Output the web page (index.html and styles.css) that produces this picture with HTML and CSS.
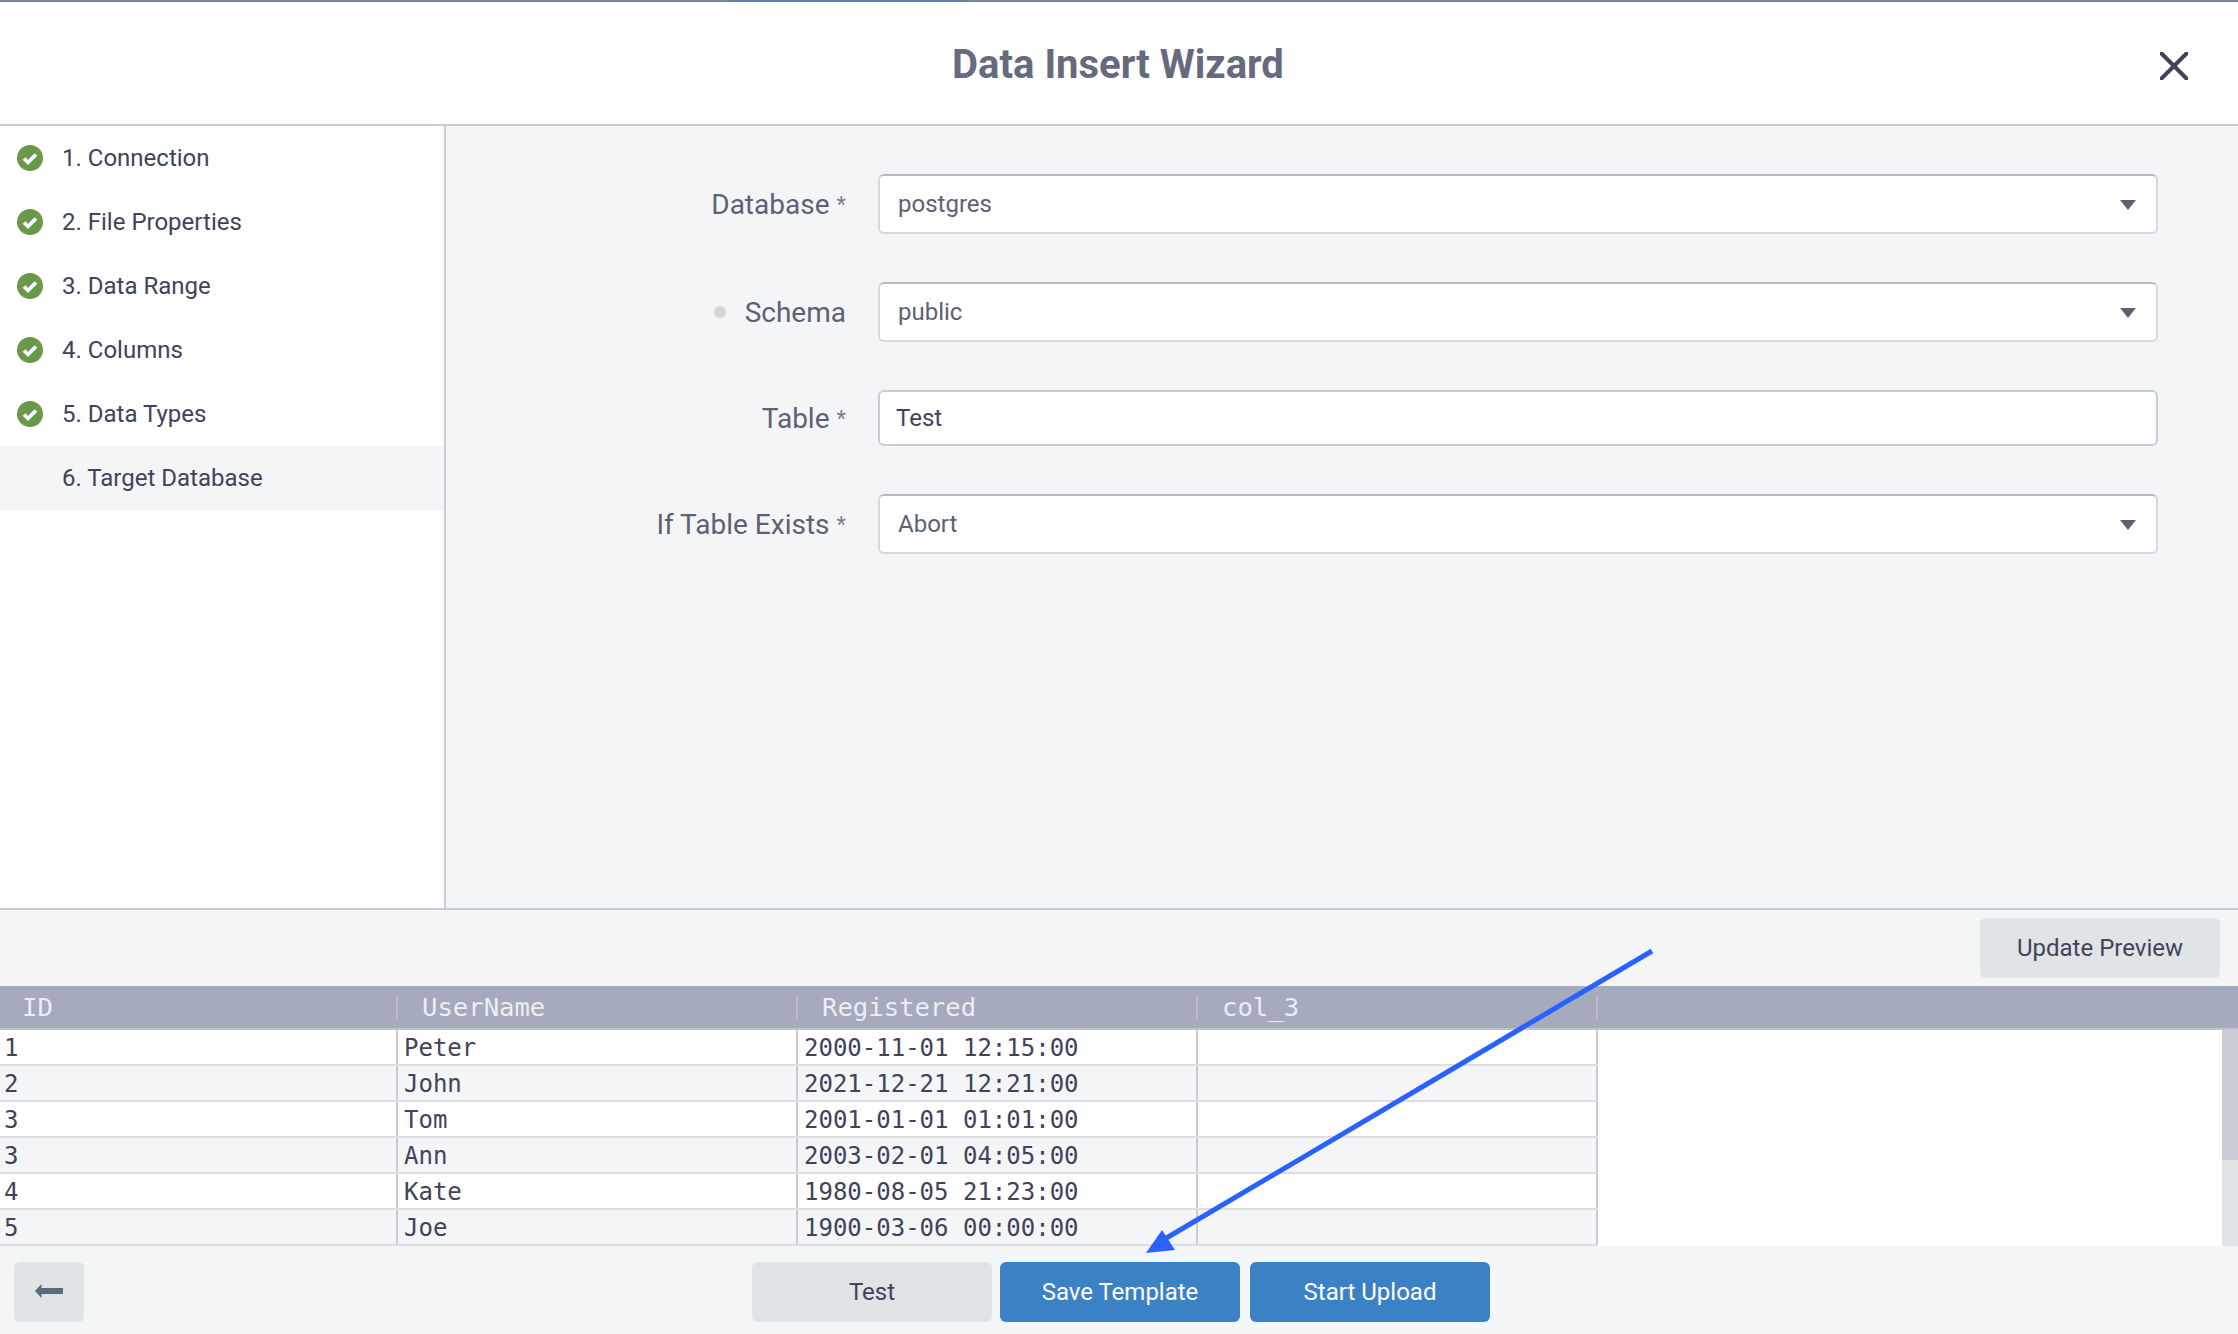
FILE: index.html
```html
<!DOCTYPE html>
<html lang="en">
<head>
<meta charset="utf-8">
<title>Data Insert Wizard</title>
<link rel="stylesheet" href="styles.css">
</head>
<body>
<div class="app">
  <div class="topline"></div>
  <header class="head">
    <h1 class="title">Data Insert Wizard</h1>
    <svg class="close" width="28" height="28" viewBox="0 0 28 28"><path d="M1.5 1.5 26.5 26.5M26.5 1.5 1.5 26.5"/></svg>
  </header>
  <main class="main">
    <nav class="steps">
      <div class="step"><svg class="ok" width="26" height="26" viewBox="0 0 26 26"><circle cx="13" cy="13" r="13"/><path d="M7 13.5l4 4 8-8"/></svg><span>1. Connection</span></div>
      <div class="step"><svg class="ok" width="26" height="26" viewBox="0 0 26 26"><circle cx="13" cy="13" r="13"/><path d="M7 13.5l4 4 8-8"/></svg><span>2. File Properties</span></div>
      <div class="step"><svg class="ok" width="26" height="26" viewBox="0 0 26 26"><circle cx="13" cy="13" r="13"/><path d="M7 13.5l4 4 8-8"/></svg><span>3. Data Range</span></div>
      <div class="step"><svg class="ok" width="26" height="26" viewBox="0 0 26 26"><circle cx="13" cy="13" r="13"/><path d="M7 13.5l4 4 8-8"/></svg><span>4. Columns</span></div>
      <div class="step"><svg class="ok" width="26" height="26" viewBox="0 0 26 26"><circle cx="13" cy="13" r="13"/><path d="M7 13.5l4 4 8-8"/></svg><span>5. Data Types</span></div>
      <div class="step active"><span>6. Target Database</span></div>
    </nav>
    <section class="form">
      <div class="row">
        <label class="label">Database<i class="req">*</i></label>
        <div class="field select"><span>postgres</span><b class="caret"></b></div>
      </div>
      <div class="row">
        <label class="label"><i class="dot"></i>Schema</label>
        <div class="field select"><span>public</span><b class="caret"></b></div>
      </div>
      <div class="row">
        <label class="label">Table<i class="req">*</i></label>
        <div class="field input"><span>Test</span></div>
      </div>
      <div class="row">
        <label class="label">If Table Exists<i class="req">*</i></label>
        <div class="field select"><span>Abort</span><b class="caret"></b></div>
      </div>
    </section>
  </main>
  <div class="toolbar"><button class="btn grey wide">Update Preview</button></div>
  <section class="grid">
    <div class="hrow">
      <div class="hcell first">ID</div>
      <div class="hcell">UserName</div>
      <div class="hcell">Registered</div>
      <div class="hcell">col_3</div>
    </div>
    <div class="gbody">
      <div class="rows">
        <div class="drow"><div class="cell first">1</div><div class="cell">Peter</div><div class="cell">2000-11-01 12:15:00</div><div class="cell"></div></div>
        <div class="drow"><div class="cell first">2</div><div class="cell">John</div><div class="cell">2021-12-21 12:21:00</div><div class="cell"></div></div>
        <div class="drow"><div class="cell first">3</div><div class="cell">Tom</div><div class="cell">2001-01-01 01:01:00</div><div class="cell"></div></div>
        <div class="drow"><div class="cell first">3</div><div class="cell">Ann</div><div class="cell">2003-02-01 04:05:00</div><div class="cell"></div></div>
        <div class="drow"><div class="cell first">4</div><div class="cell">Kate</div><div class="cell">1980-08-05 21:23:00</div><div class="cell"></div></div>
        <div class="drow"><div class="cell first">5</div><div class="cell">Joe</div><div class="cell">1900-03-06 00:00:00</div><div class="cell"></div></div>
      </div>
      <div class="scrollbar"><div class="thumb"></div></div>
    </div>
  </section>
  <footer class="foot">
    <button class="btn grey back" aria-label="Back"><svg width="28" height="14" viewBox="0 0 28 14"><path d="M0 7 6.5 0v4H28v6H6.5v4z"/></svg></button>
    <div class="actions">
      <button class="btn grey wide">Test</button>
      <button class="btn blue wide">Save Template</button>
      <button class="btn blue wide second">Start Upload</button>
    </div>
  </footer>
  <svg class="pointer" width="2238" height="1334" viewBox="0 0 2238 1334"><path class="shaft" d="M1652 951 1158 1243"/><path class="tip" d="M1162 1230 1146 1253 1175 1250z"/></svg>
</div>
</body>
</html>
```
FILE: styles.css
```css
* { box-sizing: border-box; }
html, body { margin: 0; padding: 0; }
body { font-family: Roboto, "Liberation Sans", sans-serif; color: #40435a; background: #f4f5f7; }
.app { position: relative; width: 2238px; height: 1334px; display: flex; flex-direction: column; overflow: hidden; }
.topline { height: 2px; flex: none; background: linear-gradient(to right, #7e8a9a 728px, #64809e 728px, #64809e 968px, #7e8a9a 968px); }
.head { height: 124px; flex: none; background: #fff; border-bottom: 2px solid #c8ccd4; display: flex; align-items: center; justify-content: center; position: relative; }
.title { margin: 3px 2px 0 0; font-size: 40px; font-weight: 700; color: #666a7e; line-height: 1; }
.close { position: absolute; left: 2160px; top: 50px; }
.close path { stroke: #40435a; stroke-width: 4; stroke-linecap: round; fill: none; }
.main { height: 784px; flex: none; display: flex; border-bottom: 2px solid #c8ccd4; }
.steps { width: 446px; flex: none; background: #fff; border-right: 2px solid #c8ccd4; }
.step { height: 64px; display: flex; align-items: center; padding-left: 17px; gap: 19px; font-size: 24px; color: #40435a; }
.step.active { background: #f4f5f7; padding-left: 62px; }
.ok circle { fill: #6a994c; }
.ok path { fill: none; stroke: #fff; stroke-width: 3.6; }
.form { flex: 1; padding: 48px 80px 0 0; display: flex; flex-direction: column; gap: 48px; }
.row { display: flex; align-items: center; }
.label { width: 400px; flex: none; margin-right: 32px; text-align: right; font-size: 28px; color: #5d6174; display: flex; justify-content: flex-end; align-items: center; }
.req { font-style: normal; font-size: 22px; margin-left: 7px; color: #7b7f8f; }
.dot { width: 12px; height: 12px; border-radius: 50%; background: #d5d6da; margin-right: 19px; }
.field { flex: 1; background: #fff; border: 2px solid #d5d8dc; border-top-color: #b7babf; border-radius: 6px; display: flex; align-items: center; justify-content: space-between; font-size: 24px; }
.select { height: 60px; padding: 0 20px 0 18px; color: #5d6174; }
.input { height: 56px; padding: 0 16px; color: #40435a; border-color: #c8ccd4; }
.caret { width: 0; height: 0; border-left: 8px solid transparent; border-right: 8px solid transparent; border-top: 10px solid #5d6174; margin-top: 2px; }
.toolbar { height: 76px; flex: none; display: flex; justify-content: flex-end; padding: 8px 18px 0 0; }
.btn { height: 60px; border: 0; border-radius: 6px; font-family: inherit; font-size: 24px; padding: 0; display: flex; align-items: center; justify-content: center; }
.wide { width: 240px; }
.grey { background: #dfe4e6; color: #40435a; }
.blue { background: #3b81c6; color: #fff; }
.grid { height: 260px; flex: none; font-family: "DejaVu Sans Mono", "Liberation Mono", monospace; font-size: 24px; }
.hrow { height: 44px; background: #a5aabc; border-bottom: 2px solid #c0c3cc; display: flex; color: #eceef2; font-size: 25.6px; }
.hcell { width: 400px; padding: 0 0 0 24px; line-height: 42px; position: relative; }
.hcell.first { width: 398px; padding-left: 22px; }
.hcell::after { content: ""; position: absolute; right: 0; top: 10px; height: 22px; width: 2px; background: #b9bdcb; }
.gbody { height: 216px; background: #fff; display: flex; justify-content: space-between; }
.rows { width: 1598px; flex: none; }
.drow { height: 36px; display: flex; border-bottom: 2px solid #dcdee1; background: #fff; }
.drow:nth-child(even) { background: #f4f5f7; }
.cell { width: 400px; padding: 1px 0 0 6px; line-height: 34px; border-right: 2px solid #c8ccd4; color: #40435a; }
.cell.first { width: 398px; padding-left: 4px; }
.scrollbar { width: 16px; height: 216px; background: #dfe4e6; }
.thumb { height: 130px; background: #c8cdd6; }
.foot { flex: 1; display: flex; padding: 16px 0 0 14px; position: relative; }
.back { width: 70px; }
.back svg { margin-top: -2px; }
.back path { fill: #5b6b7c; }
.actions { display: flex; gap: 8px; margin-left: 668px; }
.second { margin-left: 2px; }
.pointer { position: absolute; left: 0; top: 0; pointer-events: none; }
.shaft { stroke: #2962ff; stroke-width: 5; fill: none; }
.tip { fill: #2962ff; }
```
